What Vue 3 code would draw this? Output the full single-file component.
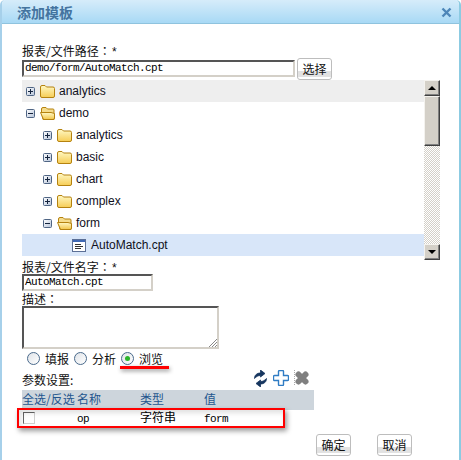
<script setup>
const tree = [
  { name: 'analytics', depth: 0, open: false, hover: true },
  { name: 'demo', depth: 0, open: true },
  { name: 'analytics', depth: 1, open: false },
  { name: 'basic', depth: 1, open: false },
  { name: 'chart', depth: 1, open: false },
  { name: 'complex', depth: 1, open: false },
  { name: 'form', depth: 1, open: true }
]
const radios = [
  { label: '填报', on: false },
  { label: '分析', on: false },
  { label: '浏览', on: true }
]
</script>

<template>
  <div class="dialog">
    <header class="head">
      <h1 class="title">添加模板</h1>
      <svg class="close" width="11" height="11" viewBox="0 0 11 11">
        <path d="M1.5 1.5l8 8M9.5 1.5l-8 8" stroke="#4d86b8" stroke-width="2.4" fill="none" />
      </svg>
    </header>

    <main class="body">
      <div class="label first">报表/文件路径<span class="colon">：</span><span class="star">*</span></div>
      <div class="path-row">
        <div class="field path">demo/form/AutoMatch.cpt</div>
        <button class="btn">选择</button>
      </div>

      <div class="tree">
        <div class="rows">
          <div
            v-for="(n, i) in tree"
            :key="i"
            class="row"
            :class="['d' + n.depth, { hover: n.hover }]"
          >
            <svg class="toggle" width="9" height="9" viewBox="0 0 9 9">
              <defs>
                <linearGradient :id="'tg' + i" x1="0" y1="0" x2="1" y2="1">
                  <stop offset="0" stop-color="#ffffff" />
                  <stop offset="1" stop-color="#b4c2d8" />
                </linearGradient>
              </defs>
              <rect x=".5" y=".5" width="8" height="8" rx="1" :fill="'url(#tg' + i + ')'" stroke="#4f6584" />
              <path d="M2 4.500h5" stroke="#14243e" />
              <path v-if="!n.open" d="M4.500 2v5" stroke="#14243e" />
            </svg>
            <svg v-if="!n.open" class="folder" width="15" height="13" viewBox="0 0 15 13">
              <defs>
                <linearGradient :id="'fg' + i" x1="0" y1="0" x2="0" y2="1">
                  <stop offset="0" stop-color="#fff8c4" />
                  <stop offset="1" stop-color="#f6cd55" />
                </linearGradient>
              </defs>
              <path d="M.5 3V2A1.500 1.500 0 0 1 2 .5h3L6.500 2h6.500A1.500 1.500 0 0 1 14.500 3.500v7.500a1.500 1.500 0 0 1-1.500 1.500H2A1.500 1.500 0 0 1 .5 11z" :fill="'url(#fg' + i + ')'" stroke="#b5820f" />
            </svg>
            <svg v-else class="folder" width="15" height="13" viewBox="0 0 15 13">
              <defs>
                <linearGradient :id="'fg' + i" x1="0" y1="0" x2="0" y2="1">
                  <stop offset="0" stop-color="#fff8c4" />
                  <stop offset="1" stop-color="#f2c548" />
                </linearGradient>
              </defs>
              <path d="M1.500 5V2A1.500 1.500 0 0 1 3 .5h3L7.500 2h5.500a1 1 0 0 1 1 1v9.500H3z" fill="#f5dc8c" stroke="#b5820f" />
              <path d="M.5 5.500h10.500l3.500 1V11a1.500 1.500 0 0 1-1.500 1.500H3.500z" :fill="'url(#fg' + i + ')'" stroke="#b5820f" />
            </svg>
            <span class="name">{{ n.name }}</span>
          </div>
          <div class="row file selected">
            <svg class="doc" width="14" height="13" viewBox="0 0 14 13">
              <rect x=".5" y=".5" width="13" height="12" fill="#fff" stroke="#5b6f96" />
              <rect x="1" y="1" width="12" height="2" fill="#3f68b4" />
              <path d="M3 5.500h6M3 7.500h8M3 9.500h6" stroke="#333" />
            </svg>
            <span class="name">AutoMatch.cpt</span>
          </div>
        </div>
        <div class="scrollbar">
          <div class="sb-btn"><i class="arrow up"></i></div>
          <div class="sb-thumb"></div>
          <div class="sb-track"></div>
          <div class="sb-btn"><i class="arrow down"></i></div>
        </div>
      </div>

      <div class="label name-label">报表/文件名字<span class="colon">：</span><span class="star">*</span></div>
      <div class="field file-name">AutoMatch.cpt</div>
      <div class="label desc-label">描述<span class="colon">：</span></div>
      <div class="field desc">
        <svg class="grip" width="8" height="8" viewBox="0 0 8 8">
          <path d="M0 8L8 0M3 8l5-5M6 8l2-2" stroke="#888" fill="none" />
        </svg>
      </div>

      <div class="radios">
        <label v-for="r in radios" :key="r.label" class="radio">
          <span class="dot" :class="{ on: r.on }"></span>{{ r.label }}
        </label>
        <span class="mark-line"></span>
      </div>

      <div class="param-head">
        <span class="param-title">参数设置:</span>
        <div class="tools">
          <svg width="15" height="17" viewBox="0 0 15 17">
            <path d="M1.500 8.500C1.500 5 4 3 7.500 3V0l4.500 3.500L7.500 7V5.500c-2.500 0-4 1-6 3z" fill="#16365f" stroke="#16365f" stroke-width=".8" />
            <path d="M13.500 8.500c0 3.500-2.500 5.500-6 5.500v3L3 13.500 7.500 10v1.500c2.500 0 4-1 6-3z" fill="#16365f" stroke="#16365f" stroke-width=".8" />
          </svg>
          <svg width="16" height="16" viewBox="0 0 16 16">
            <path d="M5.500 1.500a1 1 0 0 1 1-1h3a1 1 0 0 1 1 1v4h4a1 1 0 0 1 1 1v3a1 1 0 0 1-1 1h-4v4a1 1 0 0 1-1 1h-3a1 1 0 0 1-1-1v-4h-4a1 1 0 0 1-1-1v-3a1 1 0 0 1 1-1h4z" fill="#fff" stroke="#2f7cc4" stroke-width="1.400" />
          </svg>
          <svg width="16" height="16" viewBox="0 0 16 16">
            <path d="M.5 0v16" stroke="#aaa" stroke-dasharray="1 1" />
            <path d="M4.500 4.500l7 7M11.500 4.500l-7 7" stroke="#808080" stroke-width="6" stroke-linecap="round" />
          </svg>
        </div>
      </div>

      <div class="table">
        <div class="tr th">
          <span>全选/反选</span><span>名称</span><span>类型</span><span>值</span>
        </div>
        <div class="tr td">
          <span><i class="check"></i></span>
          <span class="mono">op</span>
          <span class="cell-type">字符串</span>
          <span class="mono">form</span>
        </div>
        <span class="mark-box"></span>
      </div>

      <div class="actions">
        <button class="btn">确定</button>
        <button class="btn">取消</button>
      </div>
    </main>
  </div>
</template>

<style scoped>
.dialog {
  width: 461px;
  height: 460px;
  box-sizing: border-box;
  display: flex;
  flex-direction: column;
  overflow: hidden;
  background: #fff;
  border-left: 2px solid #a6d0ea;
  border-right: 2px solid #8ccbe2;
  border-radius: 5px 5px 0 0;
  color: #111;
  font-family: "Noto Sans CJK SC", "Liberation Sans", sans-serif;
  font-size: 12px;
}
.head {
  height: 24px;
  flex: none;
  box-sizing: border-box;
  display: flex;
  align-items: center;
  justify-content: space-between;
  padding: 0 7px 0 15px;
  background: linear-gradient(#d6ecfa, #a8d9f5);
  border-bottom: 1px solid #8fc3de;
}
.title {
  margin: 0;
  font-size: 14px;
  font-weight: 700;
  line-height: 24px;
  color: #44749f;
}
.close { display: block; margin-top: 1px; }
.body {
  position: relative;
  padding: 17px 0 0 20px;
}
.label {
  line-height: 14px;
  height: 14px;
  color: #111;
}
.colon { font-family: "Noto Sans CJK TC", sans-serif; }
.first { height: 19px; line-height: 20px; }
.star { font-family: "Liberation Mono", monospace; }
.field {
  box-sizing: border-box;
  background: #fff;
  border: 2px solid;
  border-color: #555 #d4d0c8 #d4d0c8 #555;
  font-family: "Liberation Mono", monospace;
  font-size: 11px;
  letter-spacing: -0.6px;
  line-height: 13px;
  padding-left: 1px;
  color: #000;
}
.path-row {
  height: 20px;
  display: flex;
  align-items: flex-end;
  gap: 2px;
}
.path {
  width: 273px;
  height: 17px;
  margin-bottom: 3px;
}
.btn {
  width: 35px;
  height: 22px;
  flex: none;
  box-sizing: border-box;
  padding: 0;
  border: 1px solid #bdbdbd;
  border-radius: 3px;
  background: linear-gradient(#fff 0, #fff 60%, #e2e2e2 60%, #e2e2e2 90%, #fff 90%);
  font-family: "Noto Sans CJK SC", sans-serif;
  font-size: 12px;
  line-height: 20px;
  color: #111;
}
.tree {
  width: 418px;
  height: 180px;
  display: flex;
}
.rows { flex: 1; }
.row {
  height: 22px;
  display: flex;
  align-items: center;
  font-family: "Liberation Sans", sans-serif;
  font-size: 12px;
  color: #10101c;
}
.d0 { padding-left: 4px; }
.d1 { padding-left: 21px; }
.hover { background: #eeeeee; }
.selected { background: #d8e6f9; }
.file { padding-left: 50px; }
.toggle { flex: none; margin-right: 5px; }
.folder { flex: none; margin-right: 4px; }
.doc { flex: none; margin-right: 5px; }
.scrollbar {
  width: 16px;
  flex: none;
  display: flex;
  flex-direction: column;
}
.sb-btn, .sb-thumb {
  box-sizing: border-box;
  background: #d4d0c8;
  border: 1px solid;
  border-color: #f4f2ee #404040 #404040 #f4f2ee;
  box-shadow: inset -1px -1px 0 #808080;
  flex: none;
}
.sb-btn {
  height: 16px;
  display: flex;
  align-items: center;
  justify-content: center;
}
.sb-thumb { height: 50px; }
.sb-track {
  flex: 1;
  background: repeating-conic-gradient(#d4d0c8 0 25%, #fff 0 50%) 0 0 / 2px 2px;
}
.arrow {
  width: 0;
  height: 0;
  border-left: 4px solid transparent;
  border-right: 4px solid transparent;
}
.arrow.up { border-bottom: 4px solid #000; }
.arrow.down { border-top: 4px solid #000; }
.name-label { height: 14px; }
.file-name {
  width: 131px;
  height: 17px;
}
.desc-label {
  height: 15px;
  line-height: 15px;
}
.desc {
  position: relative;
  width: 197px;
  height: 43px;
}
.grip {
  position: absolute;
  right: 0;
  bottom: 0;
}
.radios {
  position: relative;
  height: 19px;
  display: flex;
  align-items: center;
  padding-left: 5px;
  gap: 5px;
}
.radio {
  display: flex;
  align-items: center;
  gap: 5px;
  line-height: 18px;
}
.dot {
  width: 13px;
  height: 13px;
  box-sizing: border-box;
  border-radius: 50%;
  border: 1px solid #4a6a8c;
  background: linear-gradient(135deg, #dfe3e8, #fff);
  display: flex;
  align-items: center;
  justify-content: center;
}
.dot.on::before {
  content: "";
  width: 5px;
  height: 5px;
  border-radius: 50%;
  background: #2bb52b;
}
.mark-line {
  position: absolute;
  left: 98px;
  top: 17px;
  width: 49px;
  height: 3px;
  background: #ff0000;
  box-shadow: 1px 2px 4px rgba(0, 0, 0, 0.45);
}
.param-head {
  height: 22px;
  width: 292px;
  display: flex;
  align-items: center;
  justify-content: space-between;
  box-sizing: border-box;
  padding-right: 4px;
}
.param-title { margin-top: 1px; }
.tools {
  display: flex;
  align-items: center;
  gap: 5px;
  margin-top: -2px;
}
.tools svg { display: block; }
.table {
  position: relative;
  width: 292px;
}
.tr {
  display: grid;
  grid-template-columns: 55px 63px 64px 110px;
  align-items: center;
}
.th {
  height: 20px;
  background: #cdd5dc;
  color: #24558e;
  line-height: 18px;
  padding-bottom: 2px;
  box-sizing: border-box;
}
.td {
  height: 18px;
  color: #000;
}
.cell-type { line-height: 14px; margin-top: -5px; }
.mono {
  font-family: "Liberation Mono", monospace;
  font-size: 11px;
  letter-spacing: -0.6px;
}
.check {
  display: block;
  width: 12px;
  height: 12px;
  box-sizing: border-box;
  margin: -3px 0 0 1px;
  border: 1px solid;
  border-color: #666 #d0d0d0 #d0d0d0 #666;
  background: #fff;
}
.mark-box {
  position: absolute;
  left: -5px;
  top: 18px;
  width: 268px;
  height: 20px;
  box-sizing: border-box;
  border: 2px solid #ff0000;
  box-shadow: 2px 3px 5px rgba(0, 0, 0, 0.4), inset 2px 3px 5px rgba(0, 0, 0, 0.12);
}
.actions {
  display: flex;
  gap: 26px;
  margin-top: 6px;
  padding-left: 294px;
}
</style>

<style>
html, body { margin: 0; background: #fff; }
</style>
